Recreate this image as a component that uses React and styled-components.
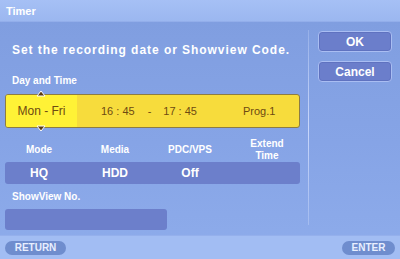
import React from 'react';
import styled, { createGlobalStyle } from 'styled-components';

const GlobalStyle = createGlobalStyle`
  html, body {
    margin: 0;
    padding: 0;
    background: #86a3e4;
  }
  body {
    font-family: "Liberation Sans", Arial, sans-serif;
  }
`;

const Frame = styled.div`
  width: 400px;
  height: 259px;
  display: flex;
  flex-direction: column;
  overflow: hidden;
  color: #fff;
  background: linear-gradient(180deg, #7f9ddf 0%, #86a4e6 55%, #8eaceb 100%);
`;

const TitleBar = styled.div`
  height: 21px;
  padding-left: 6px;
  display: flex;
  align-items: center;
  font-size: 11px;
  font-weight: bold;
  background: linear-gradient(180deg, #a6c0f5 0%, #9bb7f0 100%);
  border-bottom: 1px solid #93aeea;
`;

const Main = styled.div`
  flex: 1;
  display: flex;
`;

const Left = styled.div`
  width: 303px;
  padding-left: 5px;
  display: flex;
  flex-direction: column;
`;

const Prompt = styled.div`
  margin-top: 21px;
  padding-left: 7px;
  font-size: 12px;
  font-weight: bold;
  letter-spacing: 0.95px;
  line-height: 14px;
  white-space: nowrap;
`;

const SectionLabel = styled.div`
  margin-top: ${(p) => p.$top}px;
  padding-left: 7px;
  font-size: 10px;
  font-weight: bold;
  line-height: 12px;
`;

const TimeBox = styled.div`
  position: relative;
  margin-top: 7px;
  width: 293px;
  height: 32px;
  display: flex;
  align-items: center;
  background: #f7dc3c;
  border: 1px solid #8c7c44;
  border-radius: 3px;
  color: #6e4a12;
  font-size: 11px;
`;

const DayCell = styled.div`
  width: 71px;
  height: 100%;
  display: flex;
  align-items: center;
  justify-content: center;
  background: #fff236;
  border-radius: 2px 0 0 2px;
  font-size: 12px;
`;

const TimeText = styled.span`
  margin-left: ${(p) => p.$left}px;
  white-space: pre;
`;

const Arrow = styled.svg`
  position: absolute;
  left: 30px;
  width: 10px;
  height: 7px;
  ${(p) => (p.$down ? 'bottom: -5px;' : 'top: -5px;')}
`;

const Columns = styled.div`
  width: 295px;
  display: grid;
  grid-template-columns: 68px 84px 66px 88px;
`;

const HeadRow = styled(Columns)`
  margin-top: 10px;
  height: 23px;
  align-items: center;
`;

const Head = styled.div`
  text-align: center;
  font-size: 10px;
  font-weight: bold;
  line-height: 12px;
`;

const ValueRow = styled(Columns)`
  margin-top: 1px;
  height: 22px;
  align-items: center;
  background: #6c7fcb;
  border-radius: 3px;
`;

const Value = styled.div`
  text-align: center;
  font-size: 12px;
  font-weight: bold;
`;

const InputBox = styled.div`
  margin-top: 6px;
  width: 162px;
  height: 21px;
  background: #6c7fcb;
  border-radius: 3px;
`;

const Divider = styled.div`
  width: 1px;
  margin: 8px 0 10px;
  background: linear-gradient(180deg, rgba(200,215,250,0.3) 0%, #c9d7fb 50%, rgba(200,215,250,0.4) 100%);
`;

const Right = styled.div`
  padding: 9px 0 0 9px;
  display: flex;
  flex-direction: column;
  gap: 9px;
`;

const Button = styled.div`
  width: 72px;
  height: 19px;
  display: flex;
  align-items: center;
  justify-content: center;
  background: #6b7ecb;
  border: 1px solid #a9bdf2;
  border-radius: 4px;
  box-shadow: inset 0 0 0 1px #5f72c0;
  font-size: 12px;
  font-weight: bold;
`;

const BottomBar = styled.div`
  height: 23px;
  padding: 0 5px;
  display: flex;
  align-items: center;
  justify-content: space-between;
  background: #a2bdf3;
  border-top: 1px solid #95b0ec;
`;

const Pill = styled.div`
  width: ${(p) => p.$w}px;
  height: 14px;
  display: flex;
  align-items: center;
  justify-content: center;
  background: #6f8dce;
  border-radius: 8px;
  font-size: 10px;
  font-weight: bold;
  color: #e8efff;
`;

function ArrowIcon({ down }) {
  return (
    <Arrow $down={down} viewBox="0 0 10 7">
      <polygon
        points={down ? '1,1 9,1 5,6' : '1,6 9,6 5,1'}
        fill="#5a3a10"
        stroke="#fff"
        strokeWidth="1"
      />
    </Arrow>
  );
}

export default function App() {
  return (
    <>
      <GlobalStyle />
      <Frame>
        <TitleBar>Timer</TitleBar>
        <Main>
          <Left>
            <Prompt>Set the recording date or Showview Code.</Prompt>
            <SectionLabel $top={18}>Day and Time</SectionLabel>
            <TimeBox>
              <ArrowIcon />
              <DayCell>Mon - Fri</DayCell>
              <TimeText $left={24}>16 : 45</TimeText>
              <TimeText $left={13}>-</TimeText>
              <TimeText $left={12}>17 : 45</TimeText>
              <TimeText $left={46}>Prog.1</TimeText>
              <ArrowIcon down />
            </TimeBox>
            <HeadRow>
              <Head>Mode</Head>
              <Head>Media</Head>
              <Head>PDC/VPS</Head>
              <Head>
                Extend
                <br />
                Time
              </Head>
            </HeadRow>
            <ValueRow>
              <Value>HQ</Value>
              <Value>HDD</Value>
              <Value>Off</Value>
              <Value />
            </ValueRow>
            <SectionLabel $top={7}>ShowView No.</SectionLabel>
            <InputBox />
          </Left>
          <Divider />
          <Right>
            <Button>OK</Button>
            <Button>Cancel</Button>
          </Right>
        </Main>
        <BottomBar>
          <Pill $w={61}>RETURN</Pill>
          <Pill $w={53}>ENTER</Pill>
        </BottomBar>
      </Frame>
    </>
  );
}
